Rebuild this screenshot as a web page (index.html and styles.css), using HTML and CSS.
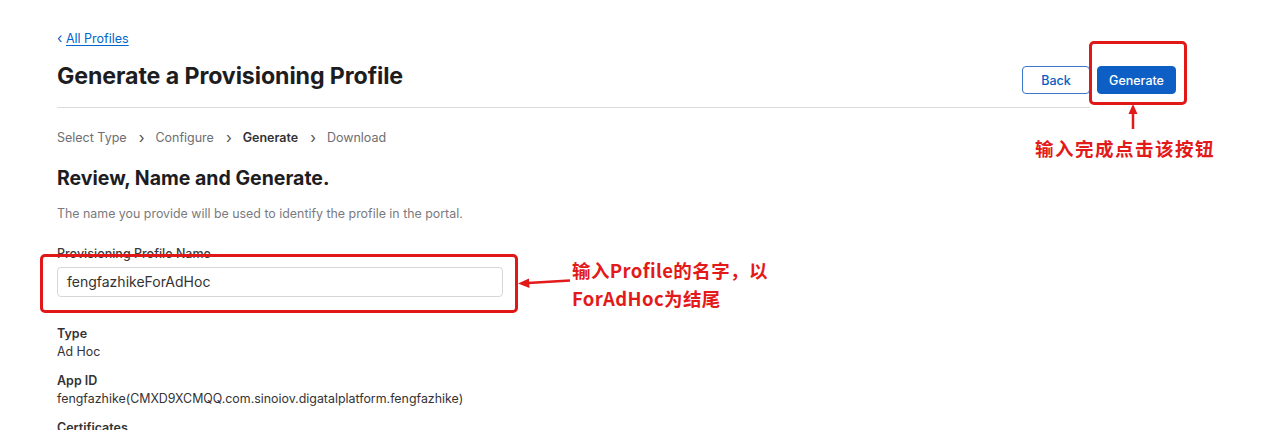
FILE: index.html
```html
<!DOCTYPE html>
<html lang="en">
<head>
<meta charset="utf-8">
<title>Generate a Provisioning Profile</title>
<link rel="stylesheet" href="styles.css">
</head>
<body>
<main class="page">
  <div class="crumb-row"><a class="back-link" href="#"><span class="lt">‹</span> <span class="u">All Profiles</span></a></div>
  <header class="header">
    <h1 class="title">Generate a Provisioning Profile</h1>
    <div class="actions">
      <button class="btn btn-secondary">Back</button>
      <button class="btn btn-primary">Generate</button>
    </div>
  </header>
  <nav class="steps">
    <span>Select Type</span><span class="chev">›</span>
    <span>Configure</span><span class="chev">›</span>
    <span class="current">Generate</span><span class="chev">›</span>
    <span>Download</span>
  </nav>
  <h2 class="subtitle">Review, Name and Generate.</h2>
  <p class="desc">The name you provide will be used to identify the profile in the portal.</p>
  <label class="field-label">Provisioning Profile Name</label>
  <div class="input">fengfazhikeForAdHoc</div>
  <dl class="details">
    <dt>Type</dt>
    <dd>Ad Hoc</dd>
    <dt>App ID</dt>
    <dd>fengfazhike(CMXD9XCMQQ.com.sinoiov.digatalplatform.fengfazhike)</dd>
    <dt>Certificates</dt>
    <dd>&nbsp;</dd>
  </dl>
</main>

<div class="mark mark-btn"></div>
<div class="mark mark-input"></div>
<svg class="arrows" width="1280" height="430" viewBox="0 0 1280 430">
  <g fill="#e31a1a" stroke="#e31a1a">
    <line x1="1133" y1="112" x2="1133" y2="129" stroke-width="2.5"/>
    <polygon points="1133,104 1128.5,114 1137.5,114" stroke="none"/>
    <line x1="528" y1="283" x2="570" y2="280.5" stroke-width="2.5"/>
    <polygon points="518,283.5 529,278.5 529.5,288" stroke="none"/>
  </g>
</svg>
<div class="note note-btn">输入完成点击该按钮</div>
<div class="note note-input">输入Profile的名字，以<br>ForAdHoc为结尾</div>
</body>
</html>
```

FILE: styles.css
```css
* { box-sizing: border-box; }
html, body { margin: 0; padding: 0; background: #fff; }
body {
  width: 1280px;
  height: 430px;
  overflow: hidden;
  position: relative;
  font-family: Inter, "Noto Sans", "Liberation Sans", sans-serif;
  color: #1d1d1f;
}
.page {
  padding: 30px 0 0 57px;
  width: 1090px;
}
.crumb-row {
  height: 18px;
  font-size: 12.5px;
  line-height: 18px;
}
.back-link {
  color: #0066cc;
  text-decoration: none;
}
.back-link .u { text-decoration: underline; text-underline-offset: 2px; }
.back-link .lt { font-size: 14px; line-height: 1; }
.header {
  display: flex;
  justify-content: space-between;
  align-items: flex-start;
  padding-bottom: 13px;
  border-bottom: 1px solid #dcdcdf;
  margin-top: 14px;
}
.title {
  margin: 0;
  font-size: 23.2px;
  line-height: 28px;
  font-weight: 700;
  letter-spacing: -0.1px;
  color: #1d1d1f;
}
.actions {
  display: flex;
  gap: 7px;
  margin-top: 4px;
  margin-right: -86px;
}
.btn {
  height: 28px;
  border-radius: 4px;
  font-family: Inter, "Noto Sans", sans-serif;
  font-size: 12.5px;
  font-weight: 500;
  padding: 0;
  cursor: pointer;
}
.btn-secondary {
  width: 68px;
  background: #fff;
  color: #0a5cc2;
  border: 1px solid #3a78c9;
}
.btn-primary {
  width: 79px;
  background: #0d5fc6;
  color: #fff;
  border: 1px solid #0d5fc6;
}
.steps {
  margin-top: 21px;
  display: flex;
  align-items: center;
  height: 18px;
  font-size: 12.5px;
  line-height: 18px;
  color: #6e6e73;
}
.steps .chev {
  margin: 0 11px 0 12px;
  font-size: 15px;
  color: #515154;
}
.steps .current { color: #333336; font-weight: 600; }
.subtitle {
  margin: 19px 0 0;
  font-size: 19.5px;
  line-height: 24px;
  font-weight: 700;
  color: #1d1d1f;
}
.desc {
  margin: 16px 0 0;
  font-size: 12.4px;
  line-height: 16px;
  color: #7a7a7e;
}
.field-label {
  display: block;
  margin-top: 24px;
  font-size: 12.5px;
  line-height: 16px;
  font-weight: 500;
  color: #3a3a3c;
}
.input {
  margin-top: 5px;
  width: 446px;
  height: 30px;
  border: 1px solid #d6d6d9;
  border-radius: 4px;
  padding: 0 9px;
  font-size: 14px;
  line-height: 28px;
  color: #333;
}
.details { margin: 28px 0 0; }
.details dt {
  font-size: 12.5px;
  line-height: 18px;
  font-weight: 600;
  color: #333336;
}
.details dd {
  margin: 0 0 11px;
  font-size: 12.4px;
  line-height: 18px;
  color: #333336;
}

/* annotations */
.mark {
  position: absolute;
  border: 3px solid #e11818;
  border-radius: 5px;
}
.mark-btn { left: 1089px; top: 41px; width: 98px; height: 64px; }
.mark-input { left: 40px; top: 254px; width: 478px; height: 59px; }
.arrows { position: absolute; left: 0; top: 0; pointer-events: none; }
.note {
  position: absolute;
  font-family: "Noto Sans CJK SC", "Noto Sans", sans-serif;
  font-weight: 700;
  font-size: 18.5px;
  line-height: 28px;
  color: #e31a1a;
  text-shadow: 0 0 2px #fff, 0 0 2px #fff, 0 0 3px #fff;
  white-space: nowrap;
}
.note-btn { left: 1035px; top: 134px; letter-spacing: 1.5px; }
.note-input { left: 572px; top: 256px; letter-spacing: 0.4px; }
```
